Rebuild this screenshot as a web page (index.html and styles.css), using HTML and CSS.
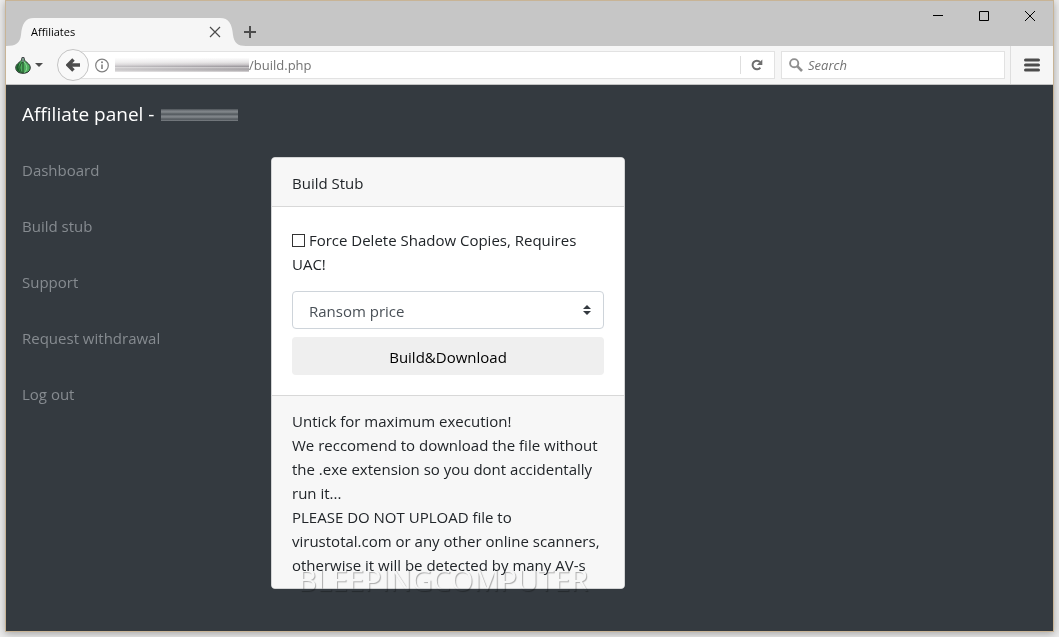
FILE: index.html
```
<!DOCTYPE html>
<html lang="en">
<head>
    <meta charset="UTF-8">
    <meta name="viewport" content="width=device-width, initial-scale=1.0">
    <title>Affiliates</title>
    <link rel="stylesheet" href="styles.css">
</head>
<body>
    <div class="window">
        <div class="titlebar">
            <div class="tab">
                <svg class="tab-shape" width="240" height="28" viewBox="0 0 240 28"><path d="M0 28C10 28 14 25 15 17C16 6 19 0 28 0H214C223 0 226 6 227 17C228 25 232 28 240 28Z" fill="#f6f6f6"/></svg>
                <span class="tab-title">Affiliates</span>
                <button class="icon-btn" aria-label="Close tab"><svg width="12" height="12" viewBox="0 0 12 12"><path d="M1 1l10 10M11 1L1 11" stroke="#4c4c4c" stroke-width="1.2"/></svg></button>
            </div>
            <button class="icon-btn new-tab" aria-label="New tab"><svg width="12" height="12" viewBox="0 0 12 12"><path d="M6 0v12M0 6h12" stroke="#4c4c4c" stroke-width="2"/></svg></button>
            <div class="window-buttons">
                <button class="icon-btn" aria-label="Minimize"><svg width="11" height="11" viewBox="0 0 11 11"><path d="M0 5.5h10" stroke="#000"/></svg></button>
                <button class="icon-btn" aria-label="Maximize"><svg width="11" height="11" viewBox="0 0 11 11"><path d="M.5 1.5h9v9h-9z" fill="none" stroke="#000"/></svg></button>
                <button class="icon-btn" aria-label="Close"><svg width="11" height="11" viewBox="0 0 11 11"><path d="M0 1l10 10M10 1L0 11" stroke="#000"/></svg></button>
            </div>
        </div>

        <div class="toolbar">
            <button class="icon-btn onion" aria-label="Tor">
                <svg width="16" height="17" viewBox="0 0 16 17">
                    <path d="M7 .5C7 3 6 4 4 5.500C1.500 7.500 .5 9 .8 11.500C1.200 14.500 4 16.300 8 16.300S14.800 14.500 15.200 11.500C15.500 9 14.500 7.500 12 5.500C10 4 9 3 9 .5Z" fill="#4fae5e" stroke="#252b2b"/>
                    <path d="M7 4C3 6.500 2.500 12 6 15.500C2.500 15 1.200 13 1.300 10.500C1.500 8 4 6 7 4Z" fill="#1c5a2b"/>
                    <path d="M8 3V16M7.500 5C4 8 4 13 7 15.800" fill="none" stroke="#1b3a22" stroke-width=".9"/>
                    <path d="M9 5C12.500 8 12.500 13 9.500 15.500" fill="none" stroke="#8fd49a"/>
                    <path d="M8 .5V5" stroke="#a9a0b8"/>
                </svg>
                <svg width="8" height="4" viewBox="0 0 8 4"><path d="M0 0h8L4 4z" fill="#4c4c4c"/></svg>
            </button>
            <button class="back" aria-label="Back"><svg width="14" height="14" viewBox="0 0 14 14"><path d="M7.500 1.500L2 7l5.500 5.500M2.500 7H14" fill="none" stroke="#4c4c4c" stroke-width="3.500"/></svg></button>
            <div class="url-bar">
                <svg width="15" height="15" viewBox="0 0 15 15"><circle cx="7" cy="7.500" r="6.300" fill="none" stroke="#808080" stroke-width="1.200"/><path d="M7 6.500V11" stroke="#808080" stroke-width="1.600"/><circle cx="7" cy="4.300" r="1" fill="#808080"/></svg>
                <span class="redacted-url"></span>
                <input class="url" type="text" aria-label="Address" value="/build.php">
                <button class="icon-btn reload" aria-label="Reload"><svg width="12" height="12" viewBox="0 0 12 12"><path d="M9 3A4.300 4.300 0 1 0 9.300 8.600" fill="none" stroke="#6e6e6e" stroke-width="2"/><path d="M11.300.5V6H5.800z" fill="#6e6e6e"/></svg></button>
            </div>
            <div class="search-bar">
                <svg width="14" height="14" viewBox="0 0 14 14"><circle cx="5.200" cy="5.200" r="4.100" fill="none" stroke="#8f8f8f" stroke-width="1.900"/><path d="M8.200 8.200L13 13" stroke="#8f8f8f" stroke-width="2.600"/></svg>
                <input class="search" type="text" placeholder="Search" aria-label="Search">
            </div>
            <button class="icon-btn menu" aria-label="Menu"><svg width="16" height="14" viewBox="0 0 16 14"><path d="M1.500 2h13M1.500 7h13M1.500 12h13" stroke="#4c4c4c" stroke-width="3" stroke-linecap="round"/></svg></button>
        </div>

        <div class="page">
            <h1>Affiliate panel - <span class="redacted-name"></span></h1>
            <div class="columns">
                <nav class="sidebar">
                    <a href="#">Dashboard</a>
                    <a href="#">Build stub</a>
                    <a href="#">Support</a>
                    <a href="#">Request withdrawal</a>
                    <a href="#">Log out</a>
                </nav>
                <main class="card">
                    <div class="card-header">Build Stub</div>
                    <form class="card-body">
                        <div class="check">
                            <input type="checkbox" id="shadow">
                            <label for="shadow">Force Delete Shadow Copies, Requires UAC!</label>
                        </div>
                        <div class="select-wrap">
                            <select aria-label="Ransom price">
                                <option>Ransom price</option>
                            </select>
                            <svg class="select-arrows" width="8" height="10" viewBox="0 0 8 10"><path d="M4 0l4 4H0zM0 6h8l-4 4z" fill="#343a40"/></svg>
                        </div>
                        <button class="build" type="button">Build&amp;Download</button>
                    </form>
                    <div class="card-footer">
                        Untick for maximum execution!<br>
                        We reccomend to download the file without the .exe extension so you dont accidentally run it...<br>
                        PLEASE DO NOT UPLOAD file to virustotal.com or any other online scanners, otherwise it will be detected by many AV-s
                    </div>
                    <div class="watermark">BLEEPINGCOMPUTER</div>
                </main>
            </div>
        </div>
    </div>
</body>
</html>
```
FILE: styles.css
```
* {
    box-sizing: border-box;
}
body {
    margin: 0;
    padding: 0 5px 5px;
    min-height: 100vh;
    display: flex;
    background-color: #ececec;
    font-family: "Segoe UI", "Open Sans", sans-serif;
    font-size: 15px;
    line-height: 24px;
    color: #212529;
}
button, input, select {
    font: inherit;
    color: inherit;
}
svg {
    display: block;
    flex: none;
}
.window {
    flex: 1;
    display: flex;
    flex-direction: column;
    border: 1px solid #c8b496;
    box-shadow: 0 2px 8px rgba(0, 0, 0, 0.3);
}
.icon-btn {
    display: flex;
    align-items: center;
    justify-content: center;
    padding: 0;
    border: 0;
    background: none;
}

/* title bar */
.titlebar {
    display: flex;
    align-items: flex-end;
    height: 45px;
    background-color: #c6c6c6;
}
.tab {
    position: relative;
    display: flex;
    align-items: center;
    justify-content: space-between;
    width: 240px;
    height: 28px;
    padding: 0 25px;
    font-size: 11px;
    color: #000;
}
.tab-shape {
    position: absolute;
    left: 0;
    top: 0;
}
.tab-title, .tab .icon-btn {
    position: relative;
}
.new-tab {
    height: 28px;
    margin-left: -2px;
}
.window-buttons {
    display: flex;
    align-self: flex-start;
    margin-left: auto;
}
.window-buttons .icon-btn {
    width: 46px;
    height: 29px;
}

/* toolbar */
.toolbar {
    display: flex;
    align-items: center;
    height: 39px;
    background-color: #f6f6f6;
    border-bottom: 1px solid #c2c2c2;
}
.onion {
    gap: 4px;
    margin: 0 14px 0 9px;
}
.back {
    position: relative;
    display: flex;
    align-items: center;
    justify-content: center;
    width: 32px;
    height: 32px;
    padding: 0;
    border: 1px solid #c4c4c4;
    border-radius: 50%;
    background-color: #f9f9f9;
}
.url-bar, .search-bar {
    display: flex;
    align-items: center;
    height: 28px;
    background-color: #fff;
    border: 1px solid #e2e2e2;
}
.url-bar {
    flex: 1;
    margin-left: -12px;
    padding-left: 17px;
}
.redacted-url {
    width: 134px;
    height: 14px;
    margin-left: 5px;
    background: linear-gradient(90deg, rgba(255, 255, 255, 0.4), rgba(255, 255, 255, 0)), linear-gradient(#fcfcfc, #e6e4e5 30%, #d2cfd1 42%, #c4c0c3 50%, #98949a 60%, #c6c3c5 68%, #a5a1a5 78%, #b4b1b3 90%, #dcdadb);
}
.url, .search {
    min-width: 0;
    flex: 1;
    padding: 0;
    border: 0;
    outline: 0;
    background: none;
    font-size: 13px;
    color: #737373;
}
.reload {
    width: 34px;
    height: 18px;
    padding-right: 2px;
    border-left: 1px solid #dedede;
}
.search-bar {
    width: 224px;
    margin: 0 5px 0 6px;
    padding: 0 7px;
    gap: 5px;
}
.search::placeholder {
    font-style: italic;
    color: #737373;
    opacity: 1;
}
.menu {
    width: 43px;
    height: 38px;
    border-left: 1px solid #dedede;
}

/* panel */
.page {
    flex: 1;
    padding: 14px 16px 42px;
    background-color: #343a40;
}
h1 {
    display: flex;
    align-items: center;
    gap: 7px;
    margin: 0 0 28px;
    font-size: 19px;
    font-weight: 400;
    line-height: 30px;
    color: #fff;
}
.redacted-name {
    width: 77px;
    height: 12px;
    margin-top: 2px;
    background: repeating-linear-gradient(#4d5358 0, #7c8186 2px, #82878b 3px, #565c61 5px);
}
.columns {
    display: grid;
    grid-template-columns: 249px 354px;
    align-items: start;
}
.sidebar {
    display: flex;
    flex-direction: column;
    gap: 32px;
    padding-top: 1px;
}
.sidebar a {
    color: #868b90;
    text-decoration: none;
}
.card {
    position: relative;
    background-color: #fff;
    border: 1px solid #d3d4d5;
    border-radius: 4px;
}
.card-header {
    padding: 13px 20px 11px;
    background-color: #f7f7f7;
    border-bottom: 1px solid #d8d8d8;
    border-radius: 3px 3px 0 0;
}
.card-body {
    margin: 0;
    padding: 21px 20px 20px;
}
.check {
    margin-bottom: 15px;
}
.check input {
    appearance: none;
    width: 13px;
    height: 13px;
    margin: 0;
    border: 1px solid #333;
    vertical-align: -1px;
}
.select-wrap {
    position: relative;
    margin-bottom: 8px;
}
.select-wrap select {
    appearance: none;
    display: block;
    width: 100%;
    height: 38px;
    padding: 2px 16px 0;
    border: 1px solid #ced4da;
    border-radius: 4px;
    background-color: #fff;
    color: #495057;
}
.select-arrows {
    position: absolute;
    right: 13px;
    top: 14px;
}
.build {
    display: block;
    width: 100%;
    height: 38px;
    padding: 2px 0 0;
    border: 0;
    border-radius: 4px;
    background-color: #efefef;
    color: #000;
}
.card-footer {
    padding: 13px 20px 11px;
    background-color: #f7f7f7;
    border-top: 1px solid #d8d8d8;
    border-radius: 0 0 3px 3px;
}
.watermark {
    position: absolute;
    left: 26px;
    bottom: -10px;
    font-size: 29px;
    line-height: 36px;
    color: #fff;
    text-shadow: 1px 1px 1px rgba(0, 0, 0, 0.3);
    mix-blend-mode: multiply;
    pointer-events: none;
}
```
